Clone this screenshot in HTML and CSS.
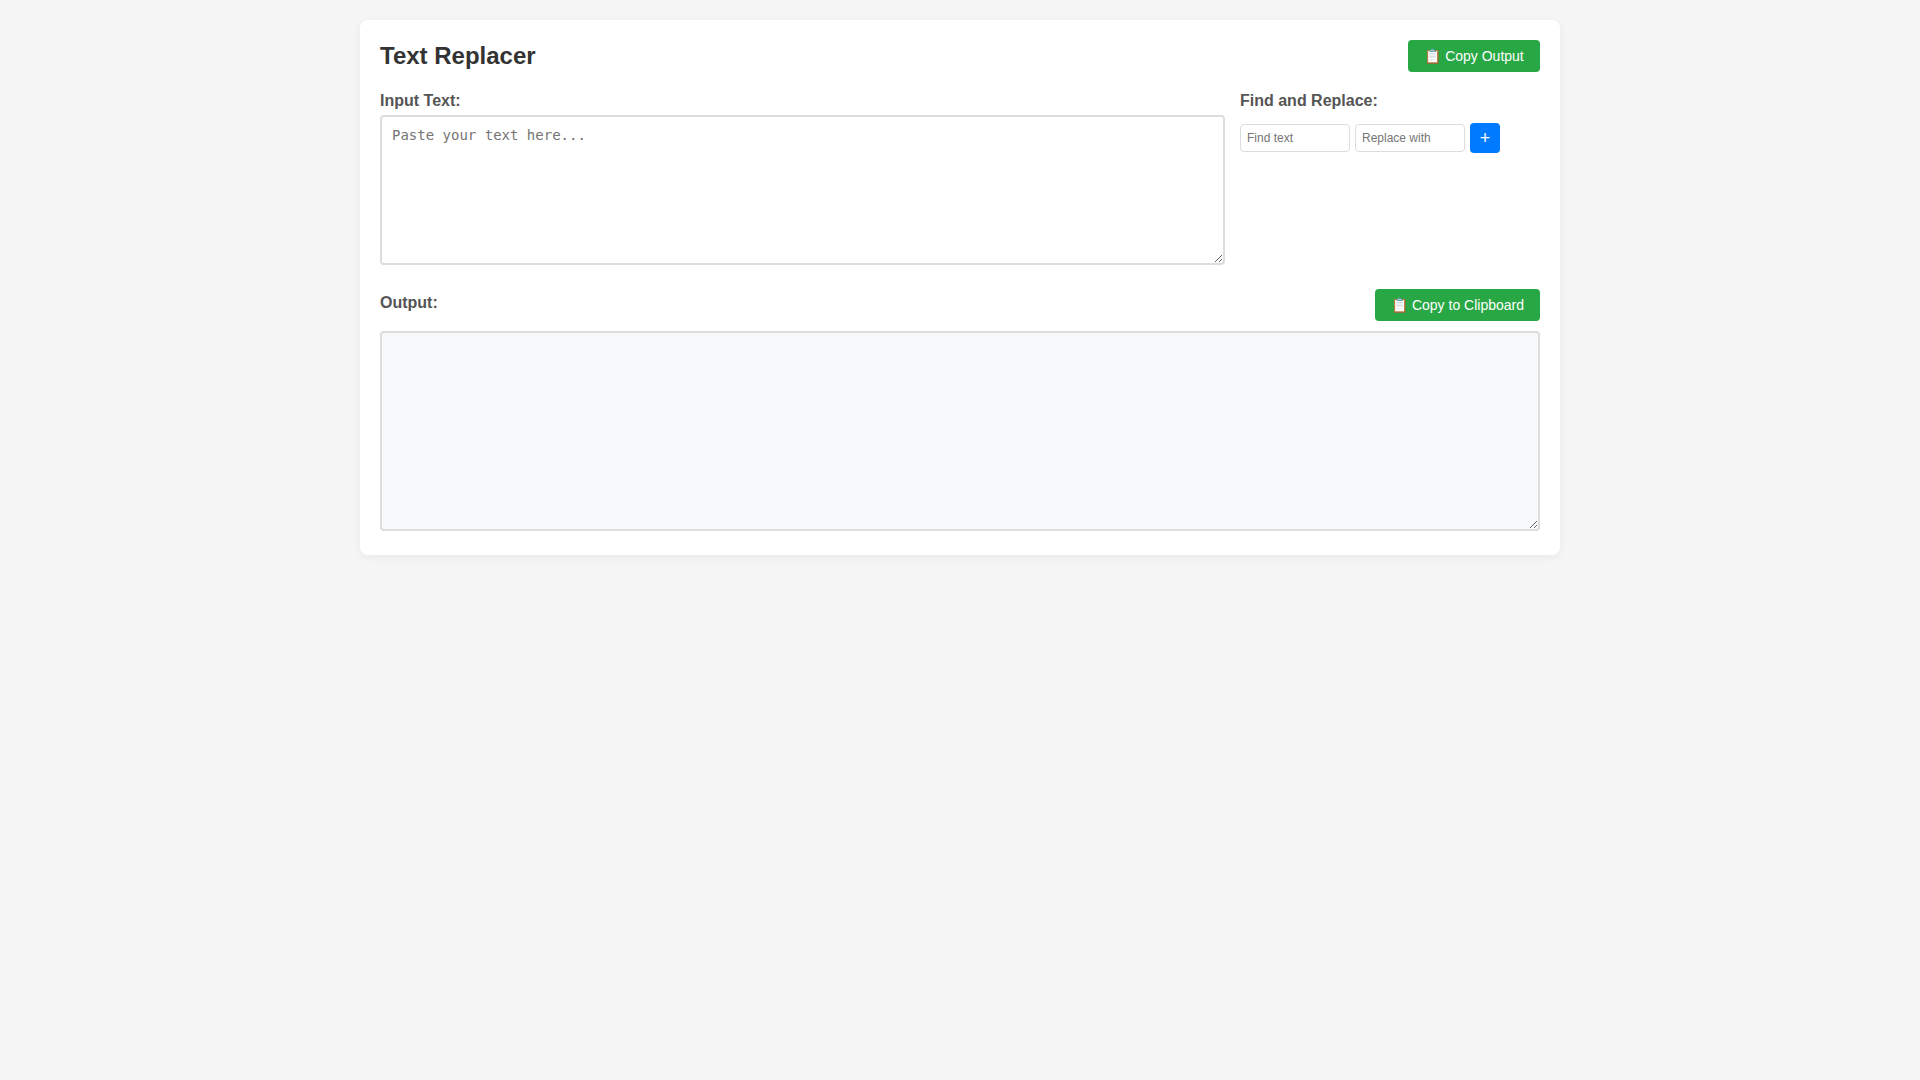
FILE: index.html
```html
<!DOCTYPE html>
<html lang="en">
<head>
<meta charset="utf-8">
<title>Text Replacer</title>
<link rel="stylesheet" href="styles.css">
</head>
<body>
<div class="container">
  <div class="header">
    <h1>Text Replacer</h1>
    <button class="copy-btn copy-output">📋 Copy Output</button>
  </div>
  <div class="top-row">
    <div class="input-col">
      <label class="label">Input Text:</label>
      <textarea class="text-box input-box" placeholder="Paste your text here..."></textarea>
    </div>
    <div class="side-col">
      <label class="label">Find and Replace:</label>
      <div class="rule-row">
        <input class="rule-input" type="text" placeholder="Find text">
        <input class="rule-input" type="text" placeholder="Replace with">
        <button class="add-btn">+</button>
      </div>
    </div>
  </div>
  <div class="output-head">
    <label class="label">Output:</label>
    <button class="copy-btn">📋 Copy to Clipboard</button>
  </div>
  <textarea class="text-box output-box" readonly></textarea>
</div>
</body>
</html>
```
FILE: styles.css
```css
* { box-sizing: border-box; }
html, body { margin: 0; }
body {
  background: #f5f5f5;
  font-family: "Liberation Sans", Arial, sans-serif;
  padding: 20px;
  min-height: 1080px;
}
.container {
  width: 1200px;
  margin: 0 auto;
  background: #fff;
  padding: 20px;
  border-radius: 8px;
  box-shadow: 0 2px 10px rgba(0, 0, 0, 0.05);
}
.header {
  display: flex;
  justify-content: space-between;
  align-items: center;
  margin-bottom: 20px;
}
h1 {
  margin: 0;
  font-size: 24px;
  font-weight: 700;
  color: #333;
}
.copy-btn {
  padding: 8px 16px;
  border: 0;
  border-radius: 4px;
  background: #28a745;
  color: #fff;
  font-family: inherit;
  font-size: 14px;
}
.copy-output { min-width: 132px; }
.top-row {
  display: flex;
  gap: 15px;
  margin-bottom: 20px;
}
.input-col { flex: 1; min-width: 0; }
.side-col { width: 300px; }
.label {
  display: block;
  margin-bottom: 5px;
  font-size: 16px;
  font-weight: 700;
  color: #555;
}
.text-box {
  width: 100%;
  padding: 10px;
  border: 2px solid #ddd;
  border-radius: 4px;
  font-family: "DejaVu Sans Mono", monospace;
  font-size: 14px;
  outline: none;
}
.input-box { height: 150px; background: #fff; }
.output-box { height: 200px; background: #f8f9fa; }
.rule-row {
  display: flex;
  align-items: center;
  gap: 5px;
  margin-top: 13px;
}
.rule-input {
  width: 110px;
  height: 28px;
  padding: 0 6px;
  border: 1px solid #ddd;
  border-radius: 4px;
  font-family: inherit;
  font-size: 12px;
  outline: none;
}
.add-btn {
  width: 30px;
  height: 30px;
  padding: 0;
  border: 0;
  border-radius: 4px;
  background: #007bff;
  color: #fff;
  font-family: inherit;
  font-size: 18px;
}
.output-head {
  display: flex;
  justify-content: space-between;
  align-items: center;
  margin-bottom: 10px;
}
```
